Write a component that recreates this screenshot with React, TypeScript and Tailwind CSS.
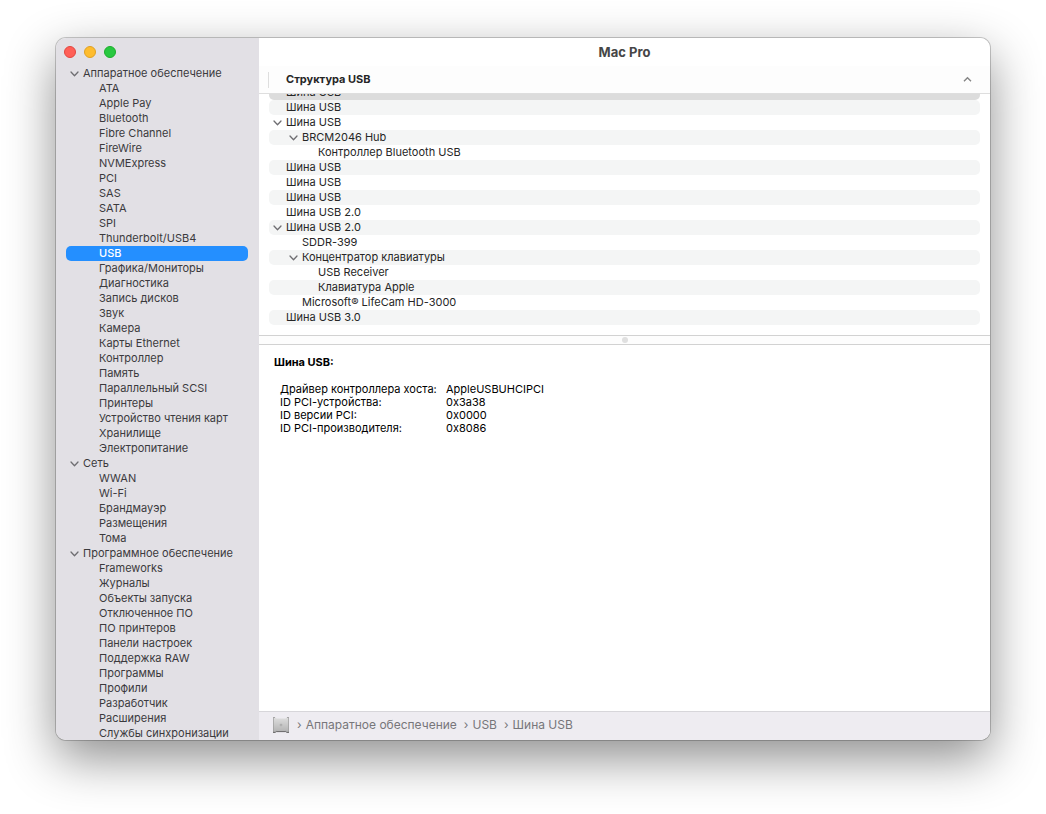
import { useState } from "react";
import clsx from "clsx";

const sections = [
  {
    title: "Аппаратное обеспечение",
    items: [
      "ATA", "Apple Pay", "Bluetooth", "Fibre Channel", "FireWire", "NVMExpress", "PCI", "SAS", "SATA", "SPI",
      "Thunderbolt/USB4", "USB", "Графика/Мониторы", "Диагностика", "Запись дисков", "Звук", "Камера",
      "Карты Ethernet", "Контроллер", "Память", "Параллельный SCSI", "Принтеры", "Устройство чтения карт",
      "Хранилище", "Электропитание",
    ],
  },
  { title: "Сеть", items: ["WWAN", "Wi-Fi", "Брандмауэр", "Размещения", "Тома"] },
  {
    title: "Программное обеспечение",
    items: [
      "Frameworks", "Журналы", "Объекты запуска", "Отключенное ПО", "ПО принтеров", "Панели настроек",
      "Поддержка RAW", "Программы", "Профили", "Разработчик", "Расширения", "Службы синхронизации",
    ],
  },
];

const devices = [
  { name: "Шина USB", level: 0 },
  { name: "Шина USB", level: 0 },
  { name: "Шина USB", level: 0, open: true },
  { name: "BRCM2046 Hub", level: 1, open: true },
  { name: "Контроллер Bluetooth USB", level: 2 },
  { name: "Шина USB", level: 0 },
  { name: "Шина USB", level: 0 },
  { name: "Шина USB", level: 0 },
  { name: "Шина USB 2.0", level: 0 },
  { name: "Шина USB 2.0", level: 0, open: true },
  { name: "SDDR-399", level: 1 },
  { name: "Концентратор клавиатуры", level: 1, open: true },
  { name: "USB Receiver", level: 2 },
  { name: "Клавиатура Apple", level: 2 },
  { name: "Microsoft® LifeCam HD-3000", level: 1 },
  { name: "Шина USB 3.0", level: 0 },
];

const indents = ["pl-1", "pl-5", "pl-9"];

const details = [
  ["Драйвер контроллера хоста:", "AppleUSBUHCIPCI"],
  ["ID PCI-устройства:", "0x3a38"],
  ["ID версии PCI:", "0x0000"],
  ["ID PCI-производителя:", "0x8086"],
];

function Chevron() {
  return (
    <svg viewBox="0 0 9 9" className="size-[9px] shrink-0" fill="none" stroke="#6f6e72" strokeWidth="1.3" strokeLinecap="round" strokeLinejoin="round" aria-hidden="true">
      <path d="M1 3l3.5 3.7L8 3" />
    </svg>
  );
}

function DriveIcon() {
  return (
    <svg viewBox="0 0 16 16" className="size-4" aria-hidden="true">
      <defs>
        <linearGradient id="drive" x1="0" y1="0" x2="0" y2="1">
          <stop offset="0" stopColor="#dedede" />
          <stop offset="1" stopColor="#b1b1b1" />
        </linearGradient>
      </defs>
      <path d="M0 .5h2.5l1 .9h9l1-.9H16v15h-2l-1-.9H3l-1 .9H0z" fill="url(#drive)" />
      <path d="M.5 1v14M15.5 1v14" stroke="#9c9c9c" strokeWidth=".7" />
      <path d="M0 .5h2M14 .5h2" stroke="#8a8a8a" strokeWidth=".7" />
      <path d="M0 15.4h2.2l1-.8h9.6l1 .8H16" fill="none" stroke="#5a5a5a" strokeWidth=".9" />
      <circle cx="8" cy="8" r="1.3" fill="#a5a5a5" />
      <circle cx="8" cy="8" r=".5" fill="#ddd" />
    </svg>
  );
}

function Sidebar() {
  const [selected, setSelected] = useState("USB");

  return (
    <aside className="flex w-[203px] shrink-0 flex-col overflow-hidden bg-[#e2e0e5]">
      <div className="flex h-7 shrink-0 items-center gap-2 pl-2">
        <button aria-label="Закрыть" className="size-3 rounded-full border border-[#e2463f] bg-[#ff5f57]" />
        <button aria-label="Свернуть" className="size-3 rounded-full border border-[#dfa023] bg-[#febc2e]" />
        <button aria-label="Развернуть" className="size-3 rounded-full border border-[#1dad2b] bg-[#28c840]" />
      </div>
      <nav className="min-h-0 overflow-hidden pr-[11px] pl-[10px] text-[#3b3a3d]">
        {sections.map((section) => (
          <section key={section.title}>
            <h2 className="flex h-[15px] items-center gap-1 pl-1">
              <Chevron />
              {section.title}
            </h2>
            <ul>
              {section.items.map((item) => (
                <li key={item}>
                  <button
                    onClick={() => setSelected(item)}
                    className={clsx(
                      "block h-[15px] w-full rounded-[5px] pl-[33px] text-left whitespace-nowrap",
                      item === selected && "bg-[#248fff] font-medium text-white",
                    )}
                  >
                    {item}
                  </button>
                </li>
              ))}
            </ul>
          </section>
        ))}
      </nav>
    </aside>
  );
}

// The list is scrolled slightly, so its first row slides under the header.
function DeviceTree() {
  return (
    <ul className="-mt-[9px] px-[10px] pb-[10px] text-[#262626]">
      {devices.map((device, i) => (
        <li key={i}>
          <button
            className={clsx(
              "flex h-[15px] w-full items-center gap-1 rounded-[5px] text-left",
              indents[device.level],
              i === 0 ? "bg-[#dcdcdc]" : i % 2 === 1 && "bg-[#f4f5f5]",
            )}
          >
            {device.open ? <Chevron /> : <span className="w-[9px]" />}
            {device.name}
          </button>
        </li>
      ))}
    </ul>
  );
}

export default function App() {
  return (
    <div className="h-screen bg-white px-14 pt-[38px] pb-[74px] font-[Inter,'Liberation_Sans',sans-serif] text-[11px] leading-[15px]">
      <div className="flex h-full overflow-hidden rounded-[10px] shadow-[0_0_0_1px_rgba(0,0,0,0.2),0_18px_50px_rgba(0,0,0,0.45)]">
        <Sidebar />
        <main className="flex min-w-0 flex-1 flex-col bg-white">
          <h1 className="h-7 shrink-0 text-center text-[13px] leading-7 font-bold text-[#464646]">Mac Pro</h1>
          <div className="flex h-7 shrink-0 items-center border-b border-[#dedede] bg-[#fdfdfd] pl-[9px]">
            <button className="flex h-4 flex-1 items-center justify-between border-l border-[#dedede] pr-[18px] pl-[17px] font-bold text-[#262626]">
              Структура USB
              <svg viewBox="0 0 9 9" className="size-[9px]" fill="none" stroke="#858585" strokeWidth="1.4" aria-hidden="true">
                <path d="M1 6.2l3.5-3.5L8 6.2" />
              </svg>
            </button>
          </div>
          <div className="shrink-0 overflow-hidden">
            <DeviceTree />
          </div>
          <div className="flex h-[10px] shrink-0 items-center justify-center border-y border-[#d2d2d2] bg-[#fdfdfd]">
            <span className="size-[6px] rounded-full bg-[#e0e0e0]" />
          </div>
          <section className="min-h-0 flex-1 overflow-hidden pt-[10px] pl-[15px] text-black">
            <h2 className="font-bold">Шина USB:</h2>
            <table className="mt-[13px] ml-[6px] leading-[13px]">
              <tbody>
                {details.map(([label, value]) => (
                  <tr key={label}>
                    <th scope="row" className="w-[166px] p-0 text-left font-normal whitespace-nowrap">{label}</th>
                    <td className="p-0">{value}</td>
                  </tr>
                ))}
              </tbody>
            </table>
          </section>
          <footer className="flex h-[29px] shrink-0 items-center border-t border-[#d7d6da] bg-[#eeecf1] pb-[2px] pl-[14px] text-xs text-[#77767a]">
            <DriveIcon />
            <span className="ml-2">›</span>
            <span className="ml-1">Аппаратное обеспечение</span>
            <span className="ml-[7px]">›</span>
            <span className="ml-1">USB</span>
            <span className="ml-[7px]">›</span>
            <span className="ml-1">Шина USB</span>
          </footer>
        </main>
      </div>
    </div>
  );
}
